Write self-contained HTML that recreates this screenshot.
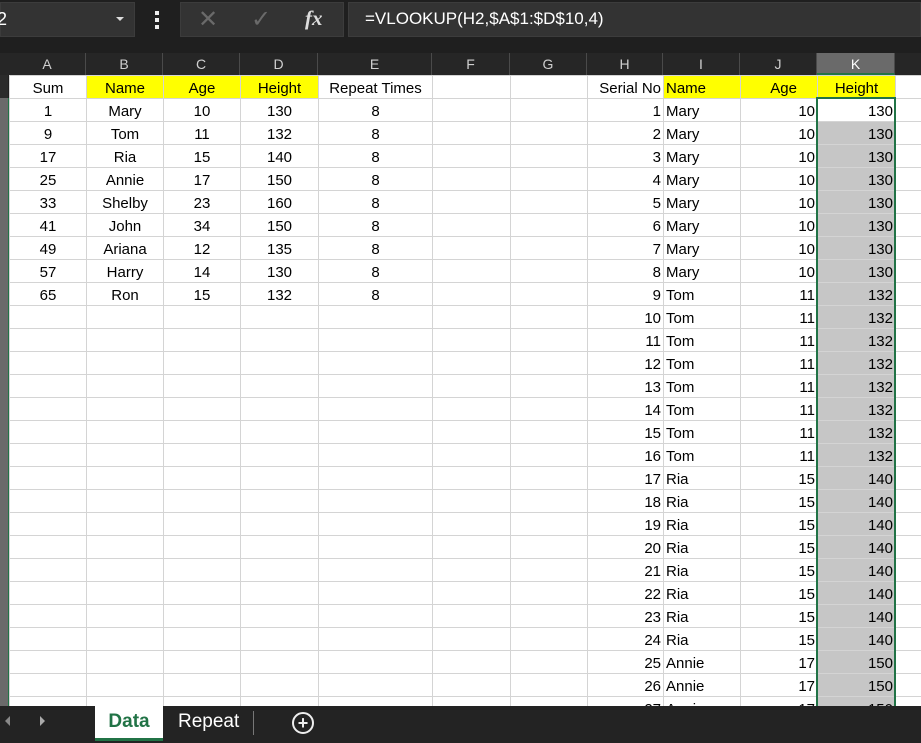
<!DOCTYPE html><html><head><meta charset="utf-8"><style>
body{margin:0;width:921px;height:743px;overflow:hidden;background:#1f1f1f;font-family:"Liberation Sans",sans-serif;position:relative}
.abs{position:absolute}
table{position:absolute;left:9px;top:75px;width:926px;border-collapse:collapse;table-layout:fixed;background:#fff}
td{border:1px solid #d4d4d4;height:22px;padding:3px 2px 0 2px;box-sizing:border-box;font-size:15px;color:#000;white-space:nowrap;overflow:hidden;line-height:19px}
tr{height:23px}
.c{text-align:center}.r{text-align:right}
.y{background:#ffff00}
.g{background:#c6c6c6}
.hd{position:absolute;top:53px;height:22px;background:#262626;color:#cfcfcf;font-size:14px;text-align:center;line-height:22px;border-right:1px solid #4a4a4a;box-sizing:border-box}
</style></head><body>
<div class="abs" style="left:0;top:2px;width:135px;height:35px;background:#333;border:1px solid #3c3c3c;box-sizing:border-box"></div>
<div class="abs" style="left:-3px;top:9px;color:#fff;font-size:18px">2</div>
<div class="abs" style="left:116px;top:17px;border-left:4px solid transparent;border-right:4px solid transparent;border-top:4px solid #ddd"></div>
<div class="abs" style="left:155px;top:11px;width:4px;height:4px;background:#eee"></div>
<div class="abs" style="left:155px;top:18px;width:4px;height:4px;background:#eee"></div>
<div class="abs" style="left:155px;top:25px;width:4px;height:4px;background:#eee"></div>
<div class="abs" style="left:180px;top:2px;width:164px;height:35px;background:#333;border:1px solid #3c3c3c;box-sizing:border-box"></div>
<div class="abs" style="left:198px;top:5px;color:#6a6a6a;font-size:24px">✕</div>
<div class="abs" style="left:251px;top:5px;color:#6a6a6a;font-size:24px">✓</div>
<div class="abs" style="left:305px;top:6px;color:#ddd;font-size:21px;font-style:italic;font-weight:bold;font-family:'Liberation Serif',serif">fx</div>
<div class="abs" style="left:348px;top:2px;width:573px;height:35px;background:#333;border:1px solid #3c3c3c;box-sizing:border-box"></div>
<div class="abs" style="left:365px;top:9px;color:#fff;font-size:17px">=VLOOKUP(H2,$A$1:$D$10,4)</div>
<div class="abs" style="left:0;top:53px;width:9px;height:22px;background:#262626"></div>
<div class="abs" style="left:0;top:75px;width:8px;height:23px;background:#2b2b2b"></div>
<div class="abs" style="left:0;top:98px;width:8px;height:608px;background:#6a6a6a"></div>
<div class="abs" style="left:8px;top:98px;width:1px;height:608px;background:#217346"></div>
<div class="hd" style="left:9px;width:77px">A</div><div class="hd" style="left:86px;width:77px">B</div><div class="hd" style="left:163px;width:77px">C</div><div class="hd" style="left:240px;width:78px">D</div><div class="hd" style="left:318px;width:114px">E</div><div class="hd" style="left:432px;width:78px">F</div><div class="hd" style="left:510px;width:77px">G</div><div class="hd" style="left:587px;width:76px">H</div><div class="hd" style="left:663px;width:77px">I</div><div class="hd" style="left:740px;width:77px">J</div><div class="hd" style="left:817px;width:78px;background:#6a6a6a;color:#fff;border-bottom:2px solid #217346">K</div><div class="hd" style="left:895px;width:30px"></div>
<table>
<colgroup><col style="width:77px"><col style="width:77px"><col style="width:77px"><col style="width:78px"><col style="width:114px"><col style="width:78px"><col style="width:77px"><col style="width:76px"><col style="width:77px"><col style="width:77px"><col style="width:78px"><col style="width:40px"></colgroup>
<tr><td class="c">Sum</td><td class="c y">Name</td><td class="c y">Age</td><td class="c y">Height</td><td class="c">Repeat Times</td><td></td><td></td><td class="r">Serial No</td><td class="y">Name</td><td class="r y" style="padding-right:20px">Age</td><td class="c y">Height</td><td></td></tr>
<tr><td class="c">1</td><td class="c">Mary</td><td class="c">10</td><td class="c">130</td><td class="c">8</td><td></td><td></td><td class="r">1</td><td>Mary</td><td class="r">10</td><td class="r">130</td><td></td></tr>
<tr><td class="c">9</td><td class="c">Tom</td><td class="c">11</td><td class="c">132</td><td class="c">8</td><td></td><td></td><td class="r">2</td><td>Mary</td><td class="r">10</td><td class="r g">130</td><td></td></tr>
<tr><td class="c">17</td><td class="c">Ria</td><td class="c">15</td><td class="c">140</td><td class="c">8</td><td></td><td></td><td class="r">3</td><td>Mary</td><td class="r">10</td><td class="r g">130</td><td></td></tr>
<tr><td class="c">25</td><td class="c">Annie</td><td class="c">17</td><td class="c">150</td><td class="c">8</td><td></td><td></td><td class="r">4</td><td>Mary</td><td class="r">10</td><td class="r g">130</td><td></td></tr>
<tr><td class="c">33</td><td class="c">Shelby</td><td class="c">23</td><td class="c">160</td><td class="c">8</td><td></td><td></td><td class="r">5</td><td>Mary</td><td class="r">10</td><td class="r g">130</td><td></td></tr>
<tr><td class="c">41</td><td class="c">John</td><td class="c">34</td><td class="c">150</td><td class="c">8</td><td></td><td></td><td class="r">6</td><td>Mary</td><td class="r">10</td><td class="r g">130</td><td></td></tr>
<tr><td class="c">49</td><td class="c">Ariana</td><td class="c">12</td><td class="c">135</td><td class="c">8</td><td></td><td></td><td class="r">7</td><td>Mary</td><td class="r">10</td><td class="r g">130</td><td></td></tr>
<tr><td class="c">57</td><td class="c">Harry</td><td class="c">14</td><td class="c">130</td><td class="c">8</td><td></td><td></td><td class="r">8</td><td>Mary</td><td class="r">10</td><td class="r g">130</td><td></td></tr>
<tr><td class="c">65</td><td class="c">Ron</td><td class="c">15</td><td class="c">132</td><td class="c">8</td><td></td><td></td><td class="r">9</td><td>Tom</td><td class="r">11</td><td class="r g">132</td><td></td></tr>
<tr><td></td><td></td><td></td><td></td><td></td><td></td><td></td><td class="r">10</td><td>Tom</td><td class="r">11</td><td class="r g">132</td><td></td></tr>
<tr><td></td><td></td><td></td><td></td><td></td><td></td><td></td><td class="r">11</td><td>Tom</td><td class="r">11</td><td class="r g">132</td><td></td></tr>
<tr><td></td><td></td><td></td><td></td><td></td><td></td><td></td><td class="r">12</td><td>Tom</td><td class="r">11</td><td class="r g">132</td><td></td></tr>
<tr><td></td><td></td><td></td><td></td><td></td><td></td><td></td><td class="r">13</td><td>Tom</td><td class="r">11</td><td class="r g">132</td><td></td></tr>
<tr><td></td><td></td><td></td><td></td><td></td><td></td><td></td><td class="r">14</td><td>Tom</td><td class="r">11</td><td class="r g">132</td><td></td></tr>
<tr><td></td><td></td><td></td><td></td><td></td><td></td><td></td><td class="r">15</td><td>Tom</td><td class="r">11</td><td class="r g">132</td><td></td></tr>
<tr><td></td><td></td><td></td><td></td><td></td><td></td><td></td><td class="r">16</td><td>Tom</td><td class="r">11</td><td class="r g">132</td><td></td></tr>
<tr><td></td><td></td><td></td><td></td><td></td><td></td><td></td><td class="r">17</td><td>Ria</td><td class="r">15</td><td class="r g">140</td><td></td></tr>
<tr><td></td><td></td><td></td><td></td><td></td><td></td><td></td><td class="r">18</td><td>Ria</td><td class="r">15</td><td class="r g">140</td><td></td></tr>
<tr><td></td><td></td><td></td><td></td><td></td><td></td><td></td><td class="r">19</td><td>Ria</td><td class="r">15</td><td class="r g">140</td><td></td></tr>
<tr><td></td><td></td><td></td><td></td><td></td><td></td><td></td><td class="r">20</td><td>Ria</td><td class="r">15</td><td class="r g">140</td><td></td></tr>
<tr><td></td><td></td><td></td><td></td><td></td><td></td><td></td><td class="r">21</td><td>Ria</td><td class="r">15</td><td class="r g">140</td><td></td></tr>
<tr><td></td><td></td><td></td><td></td><td></td><td></td><td></td><td class="r">22</td><td>Ria</td><td class="r">15</td><td class="r g">140</td><td></td></tr>
<tr><td></td><td></td><td></td><td></td><td></td><td></td><td></td><td class="r">23</td><td>Ria</td><td class="r">15</td><td class="r g">140</td><td></td></tr>
<tr><td></td><td></td><td></td><td></td><td></td><td></td><td></td><td class="r">24</td><td>Ria</td><td class="r">15</td><td class="r g">140</td><td></td></tr>
<tr><td></td><td></td><td></td><td></td><td></td><td></td><td></td><td class="r">25</td><td>Annie</td><td class="r">17</td><td class="r g">150</td><td></td></tr>
<tr><td></td><td></td><td></td><td></td><td></td><td></td><td></td><td class="r">26</td><td>Annie</td><td class="r">17</td><td class="r g">150</td><td></td></tr>
<tr><td></td><td></td><td></td><td></td><td></td><td></td><td></td><td class="r">27</td><td>Annie</td><td class="r">17</td><td class="r g">150</td><td></td></tr>
</table>
<div class="abs" style="left:816px;top:97px;width:76px;height:620px;border:2px solid #217346"></div>
<div class="abs" style="left:0;top:706px;width:921px;height:37px;background:#232323"></div>
<div class="abs" style="left:5px;top:716px;border-top:5px solid transparent;border-bottom:5px solid transparent;border-right:5px solid #888"></div>
<div class="abs" style="left:40px;top:716px;border-top:5px solid transparent;border-bottom:5px solid transparent;border-left:5px solid #aaa"></div>
<div class="abs" style="left:95px;top:706px;width:68px;height:32px;background:#fff;border-bottom:3px solid #217346;color:#217346;font-weight:bold;font-size:19px;text-align:center;line-height:32px">Data</div>
<div class="abs" style="left:178px;top:711px;color:#fff;font-size:19px">Repeat</div>
<div class="abs" style="left:253px;top:711px;width:1px;height:24px;background:#777"></div>
<div class="abs" style="left:292px;top:712px;width:18px;height:18px;border:2px solid #eee;border-radius:50%;color:#eee;text-align:center;line-height:18px;font-size:18px;font-weight:bold">+</div>
</body></html>
